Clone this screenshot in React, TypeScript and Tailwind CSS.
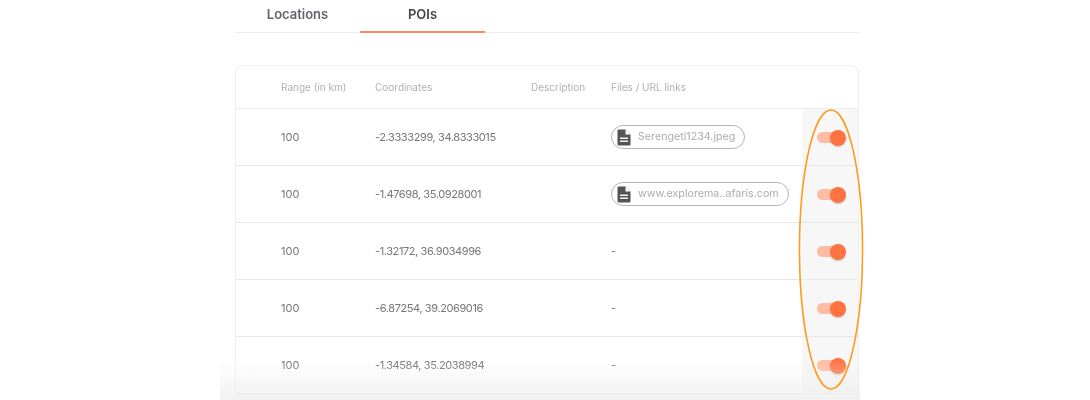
const rows = [
  { range: "100", coords: "-2.3333299, 34.8333015", file: "Serengeti1234.jpeg" },
  { range: "100", coords: "-1.47698, 35.0928001", file: "www.explorema..afaris.com" },
  { range: "100", coords: "-1.32172, 36.9034996", file: "" },
  { range: "100", coords: "-6.87254, 39.2069016", file: "" },
  { range: "100", coords: "-1.34584, 35.2038994", file: "" },
];

function FileIcon() {
  return (
    <svg width="14" height="17" viewBox="0 0 14 17" className="shrink-0">
      <path d="M1.5 0.5H8.5L13.5 5.5V15.5A1 1 0 0 1 12.5 16.5H1.5A1 1 0 0 1 0.5 15.5V1.5A1 1 0 0 1 1.5 0.5Z" fill="#555555" />
      <path d="M8.5 0.5V5.5H13.5Z" fill="#ffffff" />
      <rect x="3" y="8.5" width="8" height="1.4" fill="#ffffff" />
      <rect x="3" y="11.5" width="8" height="1.4" fill="#ffffff" />
    </svg>
  );
}

function Toggle() {
  return (
    <div className="relative w-[29px] h-[18px] flex items-center">
      <div className="w-[24px] h-[11px] rounded-full bg-[#ffbca5]" />
      <div className="absolute right-0 top-[1px] w-[16px] h-[16px] rounded-full bg-[#ff7340] shadow-[0_1px_2px_rgba(0,0,0,0.2)]" />
    </div>
  );
}

export default function App() {
  return (
    <div
      className="relative w-[1090px] h-[400px] overflow-hidden bg-white"
      style={{ fontFamily: '"Inter", "Open Sans", sans-serif' }}
    >
      <div className="ml-[235px] w-[624px] blur-[0.5px]">
        <div className="flex h-[33px] border-b border-[#ececec]">
          <div className="w-[125px] h-[33px] pt-[5px] text-center text-[13px] leading-[18px] font-semibold text-[#62656b]">
            Locations
          </div>
          <div className="w-[125px] h-[33px] pt-[5px] text-center text-[13px] leading-[18px] font-semibold text-[#444444] border-b-2 border-[#ff8a5f]">
            POIs
          </div>
        </div>

        <div className="mt-[32px] rounded-t-lg border border-b-0 border-[#efefef] overflow-hidden">
          <div className="grid grid-cols-[45px_94px_156px_80px_191px_57px] h-[43px] items-center text-[10px] text-[#b0b0b0] border-b border-[#ececec]">
            <div />
            <div>Range (in km)</div>
            <div>Coordinates</div>
            <div>Description</div>
            <div>Files / URL links</div>
            <div />
          </div>
          {rows.map((r) => (
            <div
              key={r.coords}
              className="grid grid-cols-[45px_94px_156px_80px_191px_57px] h-[57px] items-center text-[11px] text-[#767676] border-b border-[#e8e8e8]"
            >
              <div />
              <div className="pt-px">{r.range}</div>
              <div className="pt-px tracking-[-0.4px]">{r.coords}</div>
              <div />
              <div className="pt-px">
                {r.file ? (
                  <div className="inline-flex items-center gap-[7px] h-[24px] pl-[5px] pr-[9px] rounded-full border border-[#b5b5b5] text-[10.7px] text-[#adadad]">
                    <FileIcon />
                    <span>{r.file}</span>
                  </div>
                ) : (
                  "-"
                )}
              </div>
              <div className="h-full bg-[#f7f7f7] flex items-center pl-[15px] pt-px">
                <Toggle />
              </div>
            </div>
          ))}
          <div className="h-[8px] bg-[#fafafa]" />
        </div>
      </div>

      <div className="absolute left-[220px] w-[640px] bottom-0 h-[40px] bg-gradient-to-b from-white/0 to-[#eeeeee]/80 pointer-events-none" />

      <svg className="absolute left-[795px] top-[105px] pointer-events-none" width="74" height="290" viewBox="0 0 74 290">
        <ellipse cx="36" cy="144.5" rx="31.5" ry="139.5" fill="none" stroke="#ff9a1f" strokeWidth="1.6" />
      </svg>
    </div>
  );
}
